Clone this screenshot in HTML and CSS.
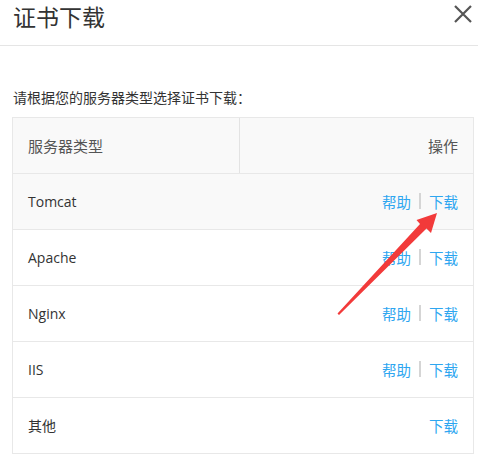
FILE: index.html
```html
<!DOCTYPE html>
<html lang="zh-CN">
<head>
<meta charset="utf-8">
<link rel="stylesheet" href="styles.css">
</head>
<body>
<div class="dialog">
  <div class="header">
    <div class="title">证书下载</div>
    <svg class="close" width="18" height="18" viewBox="0 0 18 18"><path d="M1 1L17 17M17 1L1 17" stroke="#555" stroke-width="2.2" fill="none"/></svg>
  </div>
  <div class="body">
    <p class="prompt">请根据您的服务器类型选择证书下载：</p>
    <div class="table">
      <div class="row head">
        <div class="cell name">服务器类型</div>
        <div class="cell ops">操作</div>
      </div>
      <div class="row hover">
        <div class="cell name">Tomcat</div>
        <div class="cell ops"><a>帮助</a><span class="sep"></span><a>下载</a></div>
      </div>
      <div class="row">
        <div class="cell name">Apache</div>
        <div class="cell ops"><a>帮助</a><span class="sep"></span><a>下载</a></div>
      </div>
      <div class="row">
        <div class="cell name">Nginx</div>
        <div class="cell ops"><a>帮助</a><span class="sep"></span><a>下载</a></div>
      </div>
      <div class="row">
        <div class="cell name">IIS</div>
        <div class="cell ops"><a>帮助</a><span class="sep"></span><a>下载</a></div>
      </div>
      <div class="row">
        <div class="cell name">其他</div>
        <div class="cell ops"><a>下载</a></div>
      </div>
    </div>
  </div>
  <svg class="arrow" width="478" height="471" viewBox="0 0 478 471">
    <path d="M437 213 L431 233 L426.5 228.5 L339 315 L337.5 313.5 L420 224 L416.5 220 Z" fill="#f23a3a"/>
  </svg>
</div>
</body>
</html>
```
FILE: styles.css
```css
* {
  box-sizing: border-box;
}
html, body {
  margin: 0;
  padding: 0;
  background: #fff;
}
body {
  font-family: "Open Sans", "Noto Sans CJK SC", sans-serif;
  color: #333;
  width: 478px;
  height: 471px;
  overflow: hidden;
}
.dialog {
  position: relative;
  width: 478px;
  height: 471px;
}
.header {
  height: 46px;
  border-bottom: 1px solid #e5e5e5;
  display: flex;
  justify-content: space-between;
  align-items: flex-start;
  padding: 0 6px 0 13px;
}
.title {
  font-size: 23px;
  line-height: 32px;
  color: #333;
  font-family: "Noto Sans CJK SC", sans-serif;
}
.close {
  margin-top: 5px;
}
.body {
  padding: 0 5px 0 12px;
}
.prompt {
  margin: 0;
  padding-top: 40px;
  font-size: 14px;
  line-height: 22px;
  height: 71px;
  color: #333;
  font-family: "Noto Sans CJK SC", sans-serif;
  padding-left: 1px;
}
.table {
  border: 1px solid #e8e8e8;
  width: 462px;
}
.row {
  display: flex;
  height: 56px;
  border-top: 1px solid #e8e8e8;
  align-items: stretch;
}
.row:first-child {
  border-top: none;
  height: 55px;
}
.row.head, .row.hover {
  background: #f9f9f9;
}
.cell {
  display: flex;
  align-items: center;
  font-size: 14px;
  color: #333;
  padding-bottom: 1px;
}
.name {
  width: 227px;
  padding-left: 15px;
}
.head .name {
  border-right: 1px solid #e3e3e3;
  color: #555;
  font-size: 15px;
}
.head .ops {
  color: #555;
  font-size: 15px;
}
.ops {
  flex: 1;
  justify-content: flex-end;
  padding-right: 15px;
}
.ops a {
  color: #2ea6f0;
  font-size: 14.5px;
  font-family: "Noto Sans CJK SC", sans-serif;
}
.sep {
  display: inline-block;
  width: 2px;
  height: 16px;
  background: #d5d5d5;
  margin: 0 8px;
}
.arrow {
  position: absolute;
  left: 0;
  top: 0;
  pointer-events: none;
}
```
